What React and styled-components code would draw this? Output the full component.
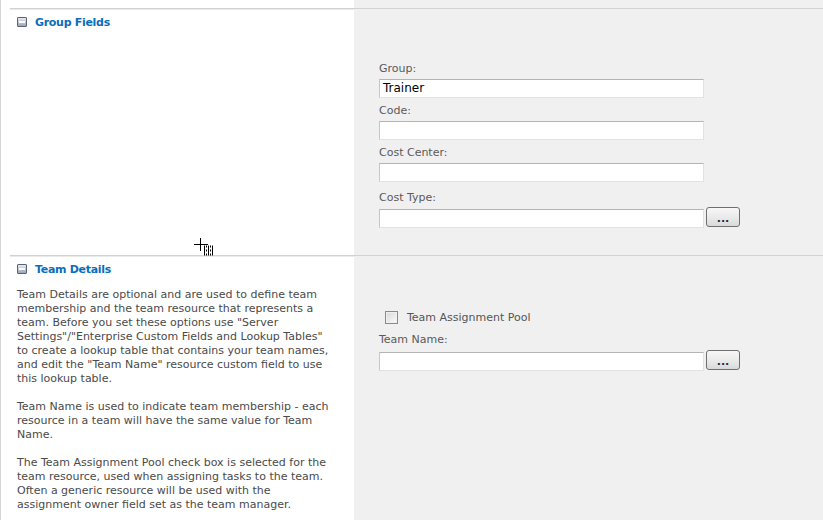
import React from "react";
import styled, { createGlobalStyle } from "styled-components";

const GlobalStyle = createGlobalStyle`
    html, body {
        margin: 0;
        padding: 0;
        background: #ffffff;
    }
    body {
        font-family: "DejaVu Sans", Tahoma, sans-serif;
        font-size: 11px;
    }
`

const Page = styled.div`
    position: relative;
    height: 520px;
    overflow: hidden;
    border-left: 1px solid #d6d6d6;
    padding-left: 9px;
    display: flex;
    flex-direction: column;
`

const Section = styled.div`
    display: grid;
    grid-template-columns: 344px 1fr;
    height: ${(p) => p.height || "auto"};
    border-top: ${(p) => (p.plain ? "none" : "1px solid #d2d2d2")};
    box-shadow: ${(p) => (p.plain ? "none" : "inset 0 1px 0 #e9e9e9")};
    flex: ${(p) => (p.grow ? 1 : "none")};
`

const Left = styled.div`
    padding: ${(p) => p.pad || "6px 0 0 7px"};
`

const Right = styled.div`
    background: #f0f0f0;
    padding: ${(p) => p.pad || "0 0 0 25px"};
    display: flex;
    flex-direction: column;
`

const Header = styled.h3`
    margin: 0;
    display: flex;
    align-items: center;
    gap: 8px;
    font-family: "DejaVu Sans", Tahoma, sans-serif;
    font-size: 11px;
    font-weight: bold;
    letter-spacing: -0.3px;
    color: #0b6dbb;
    height: 14px;
`

const Collapse = styled.span`
    width: 8px;
    height: 8px;
    border: 1px solid #56647a;
    border-radius: 1px;
    background: linear-gradient(#e6eaf0, #9aa6b6);
    display: flex;
    align-items: center;
    justify-content: center;

    &::after {
        content: "";
        width: 6px;
        height: 2px;
        background: #ffffff;
    }
`

const Description = styled.div`
    margin-top: 12px;
    width: 312px;
    color: #4a4a4a;
    font-size: 11px;
    line-height: 14px;

    p {
        margin: 0 0 14px 0;
    }
`

const Label = styled.div`
    color: #5a5a5a;
    font-size: 11px;
    height: 14px;
    line-height: 14px;
    margin-top: ${(p) => p.top || "0"};
    margin-bottom: ${(p) => p.gap || "3px"};
`

const Row = styled.div`
    display: flex;
    align-items: flex-start;
    gap: 2px;
    margin-bottom: 6px;
`

const Input = styled.div`
    box-sizing: border-box;
    width: 325px;
    height: 19px;
    background: #ffffff;
    border: 1px solid #c8c8c8;
    border-top-color: #b4b4b4;
    border-right-color: #e2e2e2;
    border-bottom-color: #e2e2e2;
    font-family: "DejaVu Sans", Tahoma, sans-serif;
    font-size: 12px;
    color: #000;
    padding: 0 3px;
    line-height: 17px;
`

const BrowseButton = styled.button`
    box-sizing: border-box;
    width: 34px;
    height: 20px;
    margin-top: -2px;
    border: 1px solid #6f6f6f;
    border-radius: 3px;
    background: linear-gradient(#f7f7f7, #e9e9e9 55%, #d9d9d9);
    color: #1c2a50;
    font-family: "DejaVu Sans", Tahoma, sans-serif;
    font-size: 11px;
    font-weight: bold;
    padding: 4px 0 0 0;
    line-height: 10px;
`

const CheckRow = styled.label`
    display: flex;
    align-items: center;
    gap: 9px;
    margin: 22px 0 9px 6px;
    color: #555;
    font-size: 11px;
    height: 14px;
`

const Box = styled.span`
    box-sizing: border-box;
    width: 13px;
    height: 13px;
    border: 1px solid #8a8a8a;
    background: linear-gradient(135deg, #d8d8d8, #fbfbfb);
    box-shadow: inset 0 0 0 1px #f0f0f0;
`

const Cursor = styled.svg`
    position: absolute;
    left: 192px;
    top: 237px;
`

const Field = ({ label, value, browse, top, gap }) => (
    <>
        <Label top={top} gap={gap}>{label}</Label>
        <Row>
            <Input>{value}</Input>
            {browse && <BrowseButton type="button">...</BrowseButton>}
        </Row>
    </>
)

const App = () => {
    return (
        <>
            <GlobalStyle />
            <Page>
                <Section plain height="8px">
                    <div />
                    <Right />
                </Section>
                <Section height="246px">
                    <Left>
                        <Header>
                            <Collapse />
                            Group Fields
                        </Header>
                    </Left>
                    <Right pad="53px 0 0 25px">
                        <Field label="Group:" value="Trainer" />
                        <Field label="Code:" />
                        <Field label="Cost Center:" />
                        <Field label="Cost Type:" top="3px" gap="4px" browse />
                    </Right>
                </Section>
                <Section grow>
                    <Left>
                        <Header>
                            <Collapse />
                            Team Details
                        </Header>
                        <Description>
                            <p>
                                Team Details are optional and are used to define team membership and the team
                                resource that represents a team. Before you set these options use "Server
                                Settings"/"Enterprise Custom Fields and Lookup Tables" to create a lookup table
                                that contains your team names, and edit the "Team Name" resource custom field
                                to use this lookup table.
                            </p>
                            <p>
                                Team Name is used to indicate team membership - each resource in a team will
                                have the same value for Team Name.
                            </p>
                            <p>
                                The Team Assignment Pool check box is selected for the team resource, used when
                                assigning tasks to the team. Often a generic resource will be used with the
                                assignment owner field set as the team manager.
                            </p>
                        </Description>
                    </Left>
                    <Right pad="32px 0 0 25px">
                        <CheckRow>
                            <Box />
                            Team Assignment Pool
                        </CheckRow>
                        <Field label="Team Name:" gap="5px" browse />
                    </Right>
                </Section>
                <Cursor width="26" height="20" viewBox="0 0 26 20">
                    <path d="M7.5 1v13M1 7.5h14" stroke="#000" strokeWidth="1" />
                    <path
                        d="M11 10h1M13 10h1M15 10h1M17 10h1M19 10h1M11 12h1M15 12h1M19 12h1M11 14h1M13 14h1M15 14h1M17 14h1M19 14h1M11 16h1M15 16h1M19 16h1M11 18h1M13 18h1M15 18h1M17 18h1M19 18h1"
                        stroke="#000"
                        strokeWidth="2"
                        transform="translate(0 -0.5)"
                    />
                </Cursor>
            </Page>
        </>
    )
}

export default App;
